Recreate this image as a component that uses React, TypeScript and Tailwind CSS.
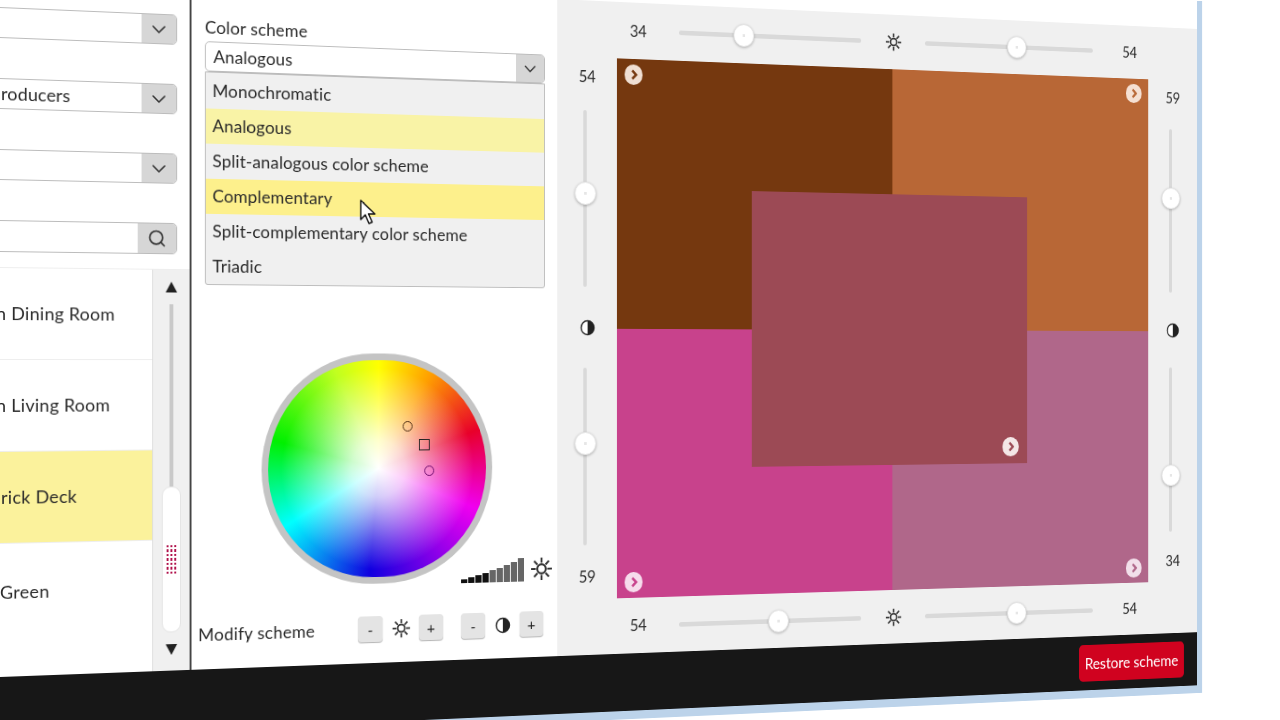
import React from 'react';
import { ChevronDown, Search } from 'lucide-react';

const Sun: React.FC<{ size?: number }> = ({ size = 20 }) => (
  <svg width={size} height={size} viewBox="0 0 24 24" fill="none" stroke="#333" strokeWidth="2" className="shrink-0">
    <circle cx="12" cy="12" r="4.5" />
    <path d="M12 1v5M12 18v5M1 12h5M18 12h5M4.2 4.2l3.6 3.6M16.2 16.2l3.6 3.6M4.2 19.8l3.6-3.6M16.2 7.800l3.6-3.6" />
  </svg>
);

const Contrast: React.FC<{ size?: number }> = ({ size = 18 }) => (
  <svg width={size} height={size} viewBox="0 0 18 18" className="shrink-0">
    <circle cx="9" cy="9" r="7.5" fill="#fff" stroke="#222" strokeWidth="1.5" />
    <path d="M9 1.500a7.500 7.500 0 0 1 0 15z" fill="#222" />
  </svg>
);

const Thumb: React.FC = () => (
  <div className="flex h-[25px] w-[25px] items-center justify-center rounded-full border border-[#e2e2e2] bg-white shadow-[0_1px_3px_rgba(0,0,0,0.25)]">
    <div className="h-[3px] w-[3px] bg-[#e6e6e6]" />
  </div>
);

const HSlider: React.FC<{ width: number; value: number }> = ({ width, value }) => (
  <div className="relative h-[5px] shrink-0 rounded bg-[#d9d9d9]" style={{ width }}>
    <div className="absolute top-[-10px] ml-[-12px]" style={{ left: value }}>
      <Thumb />
    </div>
  </div>
);

const VSlider: React.FC<{ height: number; value: number }> = ({ height, value }) => (
  <div className="relative w-[4px] shrink-0 rounded bg-[#d9d9d9]" style={{ height }}>
    <div className="absolute left-[-10px] mt-[-12px]" style={{ top: value }}>
      <Thumb />
    </div>
  </div>
);

const Num: React.FC<{ children: React.ReactNode }> = ({ children }) => (
  <div className="w-[40px] shrink-0 text-center text-[17px] leading-6 text-[#2a2a2a]">{children}</div>
);

const SliderRow: React.FC<{ left: string; a: number; b: number; right: string; className: string }> = ({
  left,
  a,
  b,
  right,
  className,
}) => (
  <div className={`flex items-center ${className}`}>
    <div className="ml-[74px]">
      <Num>{left}</Num>
    </div>
    <div className="ml-[28px]">
      <HSlider width={221} value={a} />
    </div>
    <div className="flex w-[80px] justify-center">
      <Sun size={21} />
    </div>
    <HSlider width={217} value={b} />
    <div className="ml-[29px]">
      <Num>{right}</Num>
    </div>
  </div>
);

const SliderColumn: React.FC<{ top: string; a: number; b: number; bottom: string; className: string }> = ({
  top,
  a,
  b,
  bottom,
  className,
}) => (
  <div className={`flex flex-col items-center pt-[9px] ${className}`}>
    <Num>{top}</Num>
    <div className="mt-[24px] mr-[6px]">
      <VSlider height={190} value={a} />
    </div>
    <div className="flex h-[87px] items-center">
      <Contrast />
    </div>
    <div className="mr-[6px]">
      <VSlider height={191} value={b} />
    </div>
    <div className="mt-[22px]">
      <Num>{bottom}</Num>
    </div>
  </div>
);

const Badge: React.FC<{ className: string; stroke: string }> = ({ className, stroke }) => (
  <div className={`absolute flex h-[22px] w-[21px] items-center justify-center rounded-full ${className}`}>
    <svg width="10" height="12" viewBox="0 0 10 12" fill="none" stroke={stroke} strokeWidth="2.6">
      <path d="M3 1.500l4.500 4.500-4.500 4.500" />
    </svg>
  </div>
);

const SideSelect: React.FC = () => (
  <div className="flex h-[31px] rounded-[5px] border border-[#bcbcbc] bg-white">
    <div className="flex-1" />
    <div className="flex w-[36px] items-center justify-center rounded-r-[4px] bg-[#d6d6d6]">
      <ChevronDown size={24} strokeWidth={1.6} className="text-[#333]" />
    </div>
  </div>
);

const rows = [
  { label: 'n Dining Room', offset: 'ml-[-4px]', active: false, last: false, shift: '' },
  { label: 'n Living Room', offset: 'ml-[-4px]', active: false, last: false, shift: '' },
  { label: 'rick Deck', offset: 'ml-[1px]', active: true, last: false, shift: '' },
  { label: 'Green', offset: 'ml-[0px]', active: false, last: true, shift: 'mt-[4px]' },
];

const schemes = [
  { label: 'Monochromatic', bg: '' },
  { label: 'Analogous', bg: 'bg-[#f9f3a6]' },
  { label: 'Split-analogous color scheme', bg: '' },
  { label: 'Complementary', bg: 'bg-[#fdf08c]' },
  { label: 'Split-complementary color scheme', bg: '' },
  { label: 'Triadic', bg: '' },
];

const bars = [4, 6, 8, 10, 13, 15, 18, 21, 25];

const StepButton: React.FC<{ children: React.ReactNode }> = ({ children }) => (
  <div className="flex h-[27px] w-[27px] shrink-0 items-center justify-center rounded-[4px] bg-[#e4e4e4] text-[16px] text-[#222] shadow-[0_1px_1px_rgba(0,0,0,0.3)]">
    {children}
  </div>
);

const App: React.FC = () => {
  return (
    <div className="h-screen w-screen overflow-hidden bg-white font-['Lato',sans-serif] blur-[0.5px]">
      <div className="h-[830px] w-[1520px] origin-top-left bg-white [transform:matrix3d(1,0.04352,0,0.00011956,0,1,0,0,0,0,1,0,0,-60,0,1)]">
        <div className="flex h-[808px] w-[1404px] flex-col border-r-[7px] border-b-[9px] border-[#bcd3ea]">
          <div className="flex min-h-0 flex-1">
            {/* left filters and list */}
            <div className="flex w-[196px] shrink-0 flex-col overflow-hidden border-r-2 border-[#444] bg-white">
              <div className="ml-[-10px] flex w-[191px] flex-col gap-[40px] pt-[67px]">
                <SideSelect />
                <div className="flex h-[31px] rounded-[5px] border border-[#bcbcbc] bg-white">
                  <div className="flex-1 pl-[10px] text-[18px] leading-[29px] tracking-[0.15px] whitespace-nowrap text-[#2a2a2a]">
                    roducers
                  </div>
                  <div className="flex w-[36px] items-center justify-center rounded-r-[4px] bg-[#d6d6d6]">
                    <ChevronDown size={24} strokeWidth={1.6} className="text-[#333]" />
                  </div>
                </div>
                <SideSelect />
                <div className="flex h-[32px] rounded-[5px] border border-[#bcbcbc] bg-white">
                  <div className="flex-1" />
                  <div className="flex w-[40px] items-center justify-center rounded-r-[4px] bg-[#d6d6d6]">
                    <Search size={20} strokeWidth={2} className="text-[#333]" />
                  </div>
                </div>
              </div>
              <div className="mt-[15px] flex min-h-0 flex-1 border-t border-[#eeeeee]">
                <div className="w-[155px] shrink-0 overflow-hidden">
                  {rows.map(row => (
                    <div
                      key={row.label}
                      className={`flex h-[92px] items-center ${row.last ? '' : 'border-b border-[#eeeeee]'} ${row.active ? 'bg-[#fbf29c]' : ''}`}
                    >
                      <span
                        className={`text-[18px] tracking-[0.3px] whitespace-nowrap text-[#2a2a2a] ${row.offset} ${row.shift}`}
                      >
                        {row.label}
                      </span>
                    </div>
                  ))}
                </div>
                <div className="flex flex-1 flex-col items-center border-l border-[#dddddd] bg-[#f0f0f0] pt-[12px]">
                  <div className="h-0 w-0 border-x-[6px] border-b-[11px] border-x-transparent border-b-[#222]" />
                  <div className="mt-[12px] h-[186px] w-[4px] bg-[#c9c9c9]" />
                  <div className="flex h-[149px] w-[20px] items-center justify-center rounded-[9px] border border-[#e4e4e4] bg-white">
                    <div className="grid grid-cols-3 gap-x-[2px] gap-y-[2px]">
                      {Array.from({ length: 21 }).map((_, i) => (
                        <div key={i} className="h-[2.500px] w-[2px] bg-[#b0104a]" />
                      ))}
                    </div>
                  </div>
                  <div className="mt-[12px] h-0 w-0 border-x-[6px] border-t-[11px] border-x-transparent border-t-[#222]" />
                </div>
              </div>
            </div>

            {/* color scheme column */}
            <div className="flex w-[401px] shrink-0 flex-col bg-white px-[14px] pt-[66px]">
              <div className="h-[27px] text-[18px] leading-6 tracking-[0.15px] text-[#2a2a2a]">Color scheme</div>
              <div className="relative z-10">
                <div className="flex h-[31px] rounded-[5px] border border-[#bcbcbc] bg-white">
                  <div className="flex-1 pl-[8px] text-[18px] leading-[29px] tracking-[0.15px] text-[#2a2a2a]">
                    Analogous
                  </div>
                  <div className="flex w-[32px] items-center justify-center rounded-r-[4px] bg-[#d6d6d6]">
                    <ChevronDown size={22} strokeWidth={1.6} className="text-[#333]" />
                  </div>
                </div>
                <div className="absolute top-[31px] left-0 w-full rounded-b-[3px] border border-[#bdbdbd] bg-[#f0f0f0] pt-[1px]">
                  {schemes.map(s => (
                    <div
                      key={s.label}
                      className={`h-[36px] pl-[7px] text-[18px] leading-[34px] tracking-[0.15px] text-[#2a2a2a] ${s.bg}`}
                    >
                      {s.label}
                    </div>
                  ))}
                  <svg
                    width="18"
                    height="26"
                    viewBox="0 0 18 26"
                    className="absolute top-[127px] left-[165px]"
                  >
                    <path
                      d="M1 1v20l5-5 4 9 3.500-1.500-4-8.500h7z"
                      fill="#fff"
                      stroke="#111"
                      strokeWidth="1.500"
                      strokeLinejoin="round"
                    />
                  </svg>
                </div>
              </div>

              <div className="relative mt-[289px] ml-[60px] h-[241px] w-[253px]">
                <div className="relative h-full w-full rounded-full bg-[#c4c4c4] p-[7px]">
                  <div className="h-full w-full rounded-full bg-[radial-gradient(circle,rgba(255,255,255,1)_0%,rgba(255,255,255,0.8)_18%,rgba(255,255,255,0.3)_46%,rgba(255,255,255,0)_64%,rgba(0,0,0,0)_86%,rgba(0,0,0,0.25)_100%),conic-gradient(#ffff00,#ffa000_30deg,#e8002a_70deg,#f000f0_112deg,#1000e0_185deg,#00ffff_240deg,#00f000_285deg,#c0ff20_335deg,#ffff00)]" />
                  <div className="absolute top-[71px] left-[153px] h-[11px] w-[11px] rounded-full border-[1.500px] border-[#4a2a10]" />
                  <div className="absolute top-[90px] left-[171px] h-[12px] w-[12px] border-[1.500px] border-[#222]" />
                  <div className="absolute top-[118px] left-[177px] h-[11px] w-[11px] rounded-full border-[1.500px] border-[#6b0a6b]" />
                </div>
                <div className="absolute bottom-[-2px] left-[218px] flex items-center gap-[7px]">
                  <div className="flex items-end gap-[1.500px]">
                    {bars.map((h, i) => (
                      <div
                        key={i}
                        className={`w-[6.500px] ${i < 4 ? 'bg-[#111]' : 'bg-[#666]'}`}
                        style={{ height: h }}
                      />
                    ))}
                  </div>
                  <Sun size={26} />
                </div>
              </div>

              <div className="mt-[34px] ml-[-7px] flex items-center">
                <div className="w-[171px] shrink-0 text-[18px] tracking-[0.25px] text-[#2a2a2a]">Modify scheme</div>
                <StepButton>-</StepButton>
                <div className="flex w-[40px] justify-center">
                  <Sun size={21} />
                </div>
                <StepButton>+</StepButton>
                <div className="w-[20px]" />
                <StepButton>-</StepButton>
                <div className="flex w-[39px] justify-center">
                  <Contrast />
                </div>
                <StepButton>+</StepButton>
              </div>
            </div>

            {/* color preview */}
            <div className="flex flex-1 flex-col bg-white pt-[33px]">
              <div className="flex flex-1 flex-col bg-[#f0f0f0]">
                <SliderRow left="34" a={77} b={117} right="54" className="h-[61px]" />
                <div className="flex h-[583px]">
                  <SliderColumn top="54" a={89} b={81} bottom="59" className="w-[69px]" />
                  <div className="relative grid w-[665px] grid-cols-2 grid-rows-2">
                    <div className="bg-[#75380f]" />
                    <div className="bg-[#b86736]" />
                    <div className="bg-[#c8428c]" />
                    <div className="bg-[#b0678a]" />
                    <div className="absolute top-[140px] left-[160px] h-[303px] w-[345px] bg-[#9c4a55]">
                      <Badge className="right-[11px] bottom-[8px] bg-[#f4e6e6]" stroke="#9c4a55" />
                    </div>
                    <Badge className="top-[6px] left-[9px] bg-[#f0dfd3]" stroke="#75380f" />
                    <Badge className="top-[6px] right-[9px] bg-[#f5e0d3]" stroke="#b86736" />
                    <Badge className="bottom-[6px] left-[9px] bg-[#f6dcec]" stroke="#c8428c" />
                    <Badge className="right-[9px] bottom-[6px] bg-[#f2dfea]" stroke="#b0678a" />
                  </div>
                  <SliderColumn top="59" a={80} b={125} bottom="34" className="w-[66px]" />
                </div>
                <SliderRow left="54" a={119} b={117} right="54" className="h-[60px]" />
              </div>
            </div>
          </div>

          <div className="flex h-[62px] shrink-0 items-center justify-end bg-[#171717] pr-[18px]">
            <div className="flex h-[42px] w-[140px] items-center justify-center rounded-[5px] bg-[#d0021f] text-[18px] whitespace-nowrap text-white">
              Restore scheme
            </div>
          </div>
        </div>
      </div>
    </div>
  );
};

export default App;
